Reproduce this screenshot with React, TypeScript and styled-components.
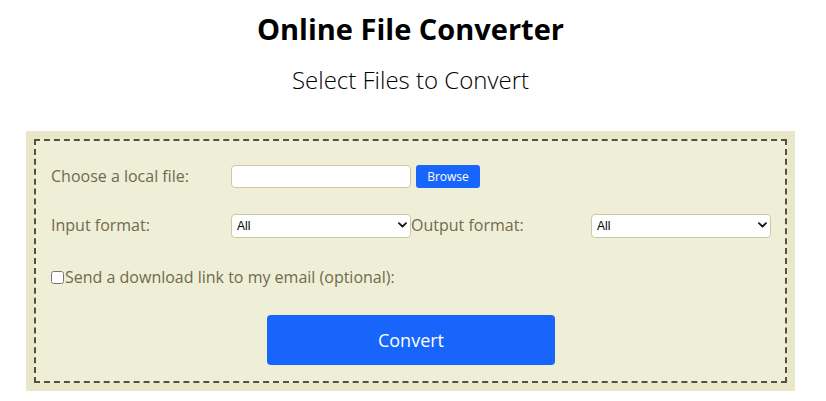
import styled, { createGlobalStyle } from "styled-components";

const GlobalStyle = createGlobalStyle`
    body {
        margin: 0;
        background: #ffffff;
        font-family: "Open Sans", "Noto Sans", sans-serif;
    }
`

const Chevron = () => (
    <ChevronIcon width="9" height="6" viewBox="0 0 9 6">
        <path d="M1 1.2 L4.5 4.6 L8 1.2" fill="none" stroke="#111" strokeWidth="1.8" strokeLinecap="round" strokeLinejoin="round"/>
    </ChevronIcon>
)

const FormatSelect = () => (
    <SelectWrap>
        <StyledSelect defaultValue="all">
            <option value="all">All</option>
        </StyledSelect>
        <Chevron/>
    </SelectWrap>
)

export default function App() {
    return (
        <>
            <GlobalStyle/>
            <Page>
                <Title>Online File Converter</Title>
                <Subtitle>Select Files to Convert</Subtitle>
                <Panel>
                    <DashedBox>
                        <Row height={46}>
                            <Label>Choose a local file:</Label>
                            <FileCell>
                                <TextInput type="text"/>
                                <SmallButton>Browse</SmallButton>
                            </FileCell>
                        </Row>
                        <Row height={52}>
                            <Label>Input format:</Label>
                            <FormatSelect/>
                            <Label>Output format:</Label>
                            <FormatSelect/>
                        </Row>
                        <Row height={52}>
                            <CheckLabel>
                                <CheckBox type="checkbox"/>
                                Send a download link to my email (optional):
                            </CheckLabel>
                        </Row>
                        <ConvertButton>Convert</ConvertButton>
                    </DashedBox>
                </Panel>
            </Page>
        </>
    );
}

const Page = styled.div`
    width: 769px;
    margin-left: 26px;
    padding-top: 10px;
`
const Title = styled.h1`
    margin: 0;
    text-align: center;
    font-size: 29px;
    font-weight: 700;
    line-height: 38px;
    color: #000;
`
const Subtitle = styled.h2`
    margin: 17px 0 0;
    text-align: center;
    font-size: 24px;
    font-weight: 300;
    line-height: 30px;
    color: #000;
`
const Panel = styled.div`
    margin-top: 36px;
    background: #e8e7c9;
    padding: 8px;
`
const DashedBox = styled.div`
    border: 2px dashed #56503c;
    background: #efefd7;
    padding: 12px 14px 16px 15px;
    display: flex;
    flex-direction: column;
    align-items: center;
`
const Row = styled.div<{ height: number }>`
    width: 720px;
    height: ${p => p.height}px;
    display: grid;
    grid-template-columns: repeat(4, 180px);
    align-items: center;
`
const Label = styled.span`
    font-size: 16px;
    color: #706a4e;
`
const FileCell = styled.div`
    grid-column: span 2;
    display: flex;
    align-items: center;
    gap: 5px;
`
const TextInput = styled.input`
    box-sizing: border-box;
    width: 180px;
    height: 23px;
    border: 1px solid #cdc9a8;
    border-radius: 4px;
    background: #fff;
    outline: none;
`
const SmallButton = styled.button`
    box-sizing: border-box;
    width: 64px;
    height: 23px;
    border: none;
    border-radius: 3px;
    background: #1865fc;
    color: #fff;
    font-family: "Open Sans", sans-serif;
    font-size: 12px;
    padding: 0;
`
const SelectWrap = styled.div`
    position: relative;
    width: 180px;
    height: 24px;
`
const StyledSelect = styled.select`
    appearance: none;
    box-sizing: border-box;
    width: 180px;
    height: 24px;
    border: 1px solid #cdc9a8;
    border-radius: 4px;
    background: #fff;
    padding: 0 0 0 5px;
    font-family: "Liberation Sans", Arial, sans-serif;
    font-size: 12px;
    color: #000;
`
const ChevronIcon = styled.svg`
    position: absolute;
    right: 4px;
    top: 9px;
    pointer-events: none;
`
const CheckLabel = styled.label`
    grid-column: span 4;
    display: flex;
    align-items: center;
    font-size: 16px;
    color: #706a4e;
`
const CheckBox = styled.input`
    width: 13px;
    height: 13px;
    margin: 0 1px 0 0;
`
const ConvertButton = styled.button`
    margin-top: 12px;
    width: 288px;
    height: 50px;
    border: none;
    border-radius: 4px;
    background: #1865fc;
    color: #fff;
    font-family: "Open Sans", sans-serif;
    font-size: 18px;
`
